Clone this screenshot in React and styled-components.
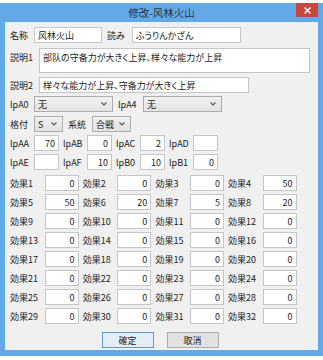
import React from 'react';
import styled, { createGlobalStyle } from 'styled-components';

const Global = createGlobalStyle`
  html, body { margin: 0; padding: 0; background: #ffffff; }
  body { font-family: "Noto Sans CJK JP", "Noto Sans", sans-serif; }
  * { box-sizing: border-box; }
`;

const Page = styled.div`
  width: 323px;
  height: 360px;
  padding-top: 3px;
  background: #ffffff;
  overflow: hidden;
`;

const Window = styled.div`
  background: #63a9e7;
  padding: 0 5px 6px;
  display: flex;
  flex-direction: column;
`;

const TitleBar = styled.div`
  height: 19px;
  display: grid;
  grid-template-columns: 1fr auto 1fr;
  align-items: center;
`;

const Title = styled.div`
  grid-column: 2;
  font-size: 10.5px;
  color: #2b3440;
  font-feature-settings: "palt";
  line-height: 1;
  padding-top: 1px;
`;

const Close = styled.div`
  grid-column: 3;
  justify-self: end;
  align-self: start;
  width: 22px;
  height: 14px;
  background: #c7473f;
  color: #fff;
  display: flex;
  align-items: center;
  justify-content: center;
`;

const Client = styled.div`
  background: #f0f0f0;
  height: 328px;
  padding: 0 8px 0 5px;
  display: flex;
  flex-direction: column;
  font-size: 9px;
  font-feature-settings: "palt";
  color: #222;
`;

const Row = styled.div`
  display: flex;
  align-items: ${p => (p.$top ? 'flex-start' : 'stretch')};
  height: ${p => p.$h || 16}px;
  margin-top: ${p => p.$mt ?? 3}px;
`;

const Label = styled.div`
  flex: none;
  width: ${p => p.$w}px;
  margin-left: ${p => p.$ml || 0}px;
  display: flex;
  align-items: ${p => (p.$top ? 'flex-start' : 'center')};
  padding-top: ${p => (p.$top ? 3 : 0)}px;
  white-space: nowrap;
  color: #222;
`;

const Field = styled.input`
  flex: none;
  width: ${p => p.$w}px;
  height: 100%;
  margin: 0;
  border: 1px solid #c4c6cb;
  background: #fff;
  font: inherit;
  font-size: 9px;
  font-feature-settings: "palt";
  color: #222;
  padding: 0 ${p => (p.$num ? 3 : 2)}px 0 3px;
  text-align: ${p => (p.$num ? 'right' : 'left')};
  outline: none;
`;

const Area = styled.textarea`
  flex: none;
  width: ${p => p.$w}px;
  height: 100%;
  margin: 0;
  border: 1px solid #c4c6cb;
  background: #fff;
  font: inherit;
  font-size: 9px;
  font-feature-settings: "palt";
  color: #222;
  padding: 2px 3px;
  resize: none;
  overflow: hidden;
  outline: none;
`;

const Select = styled.div`
  flex: none;
  width: ${p => p.$w}px;
  height: 100%;
  border: 1px solid #acacac;
  background: linear-gradient(#f0f0f0, #e3e3e3);
  display: flex;
  align-items: center;
  justify-content: space-between;
  padding: 0 5px 0 3px;
  color: #222;
`;

const Chevron = () => (
  <svg width="6" height="4" viewBox="0 0 6 4">
    <path d="M0.5 0.5 L3 3 L5.5 0.5" fill="none" stroke="#555" strokeWidth="1.1" />
  </svg>
);

const EffectGrid = styled.div`
  margin-top: 5px;
  display: grid;
  grid-template-columns: repeat(4, 68.5px);
  column-gap: 4.2px;
  row-gap: 3px;
`;

const Pair = styled.div`
  display: flex;
  height: 16px;
`;

const Buttons = styled.div`
  margin-top: 8px;
  display: flex;
  justify-content: center;
  gap: 13px;
  height: 16px;
`;

const Button = styled.div`
  width: 52px;
  height: 16px;
  border: 1px solid ${p => (p.$primary ? '#5b9bd5' : '#adadad')};
  background: ${p => (p.$primary ? '#e5eef7' : '#e1e1e1')};
  display: flex;
  align-items: center;
  justify-content: center;
  font-size: 9px;
  color: #222;
`;

const effects = [0, 0, 0, 50, 50, 20, 5, 20, 0, 0, 0, 0, 0, 0, 0, 0, 0, 0, 0, 0, 0, 0, 0, 0, 0, 0, 0, 0, 0, 0, 0, 0];

export default function App() {
  return (
    <>
      <Global />
      <Page>
        <Window>
          <TitleBar>
            <Title>修改-风林火山</Title>
            <Close>
              <svg width="7" height="7" viewBox="0 0 7 7">
                <path d="M0.5 0.5 L6.5 6.5 M6.5 0.5 L0.5 6.5" stroke="#fff" strokeWidth="1.4" />
              </svg>
            </Close>
          </TitleBar>
          <Client>
            <Row $mt={5}>
              <Label $w={24}>名称</Label>
              <Field $w={68} readOnly defaultValue="风林火山" />
              <Label $w={25} $ml={5}>読み</Label>
              <Field $w={109} readOnly defaultValue="ふうりんかざん" />
            </Row>
            <Row $mt={5} $h={25}>
              <Label $w={29} $top>説明1</Label>
              <Area $w={271} readOnly defaultValue="部队の守备力が大きく上昇、样々な能力が上昇" />
            </Row>
            <Row $mt={4}>
              <Label $w={29}>説明2</Label>
              <Field $w={210} readOnly defaultValue="样々な能力が上昇、守备力が大きく上昇" />
            </Row>
            <Row $mt={3}>
              <Label $w={24}>lpA0</Label>
              <Select $w={79}><span>无</span><Chevron /></Select>
              <Label $w={25} $ml={5}>lpA4</Label>
              <Select $w={79}><span>无</span><Chevron /></Select>
            </Row>
            <Row $mt={4}>
              <Label $w={24}>格付</Label>
              <Select $w={29}><span>S</span><Chevron /></Select>
              <Label $w={24} $ml={5}>系统</Label>
              <Select $w={39}><span>合戦</span><Chevron /></Select>
            </Row>
            <Row $mt={3}>
              <Label $w={24}>lpAA</Label>
              <Field $w={25} $num readOnly defaultValue="70" />
              <Label $w={24} $ml={4}>lpAB</Label>
              <Field $w={25} $num readOnly defaultValue="0" />
              <Label $w={24} $ml={4}>lpAC</Label>
              <Field $w={25} $num readOnly defaultValue="2" />
              <Label $w={24} $ml={4}>lpAD</Label>
              <Field $w={25} $num readOnly defaultValue="" />
            </Row>
            <Row $mt={3}>
              <Label $w={24}>lpAE</Label>
              <Field $w={25} $num readOnly defaultValue="" />
              <Label $w={24} $ml={4}>lpAF</Label>
              <Field $w={25} $num readOnly defaultValue="10" />
              <Label $w={24} $ml={4}>lpB0</Label>
              <Field $w={25} $num readOnly defaultValue="10" />
              <Label $w={24} $ml={4}>lpB1</Label>
              <Field $w={25} $num readOnly defaultValue="0" />
            </Row>
            <EffectGrid>
              {effects.map((v, i) => (
                <Pair key={i}>
                  <Label $w={34.5}>効果{i + 1}</Label>
                  <Field $w={34} $num readOnly defaultValue={String(v)} />
                </Pair>
              ))}
            </EffectGrid>
            <Buttons>
              <Button $primary>確定</Button>
              <Button>取消</Button>
            </Buttons>
          </Client>
        </Window>
      </Page>
    </>
  );
}
